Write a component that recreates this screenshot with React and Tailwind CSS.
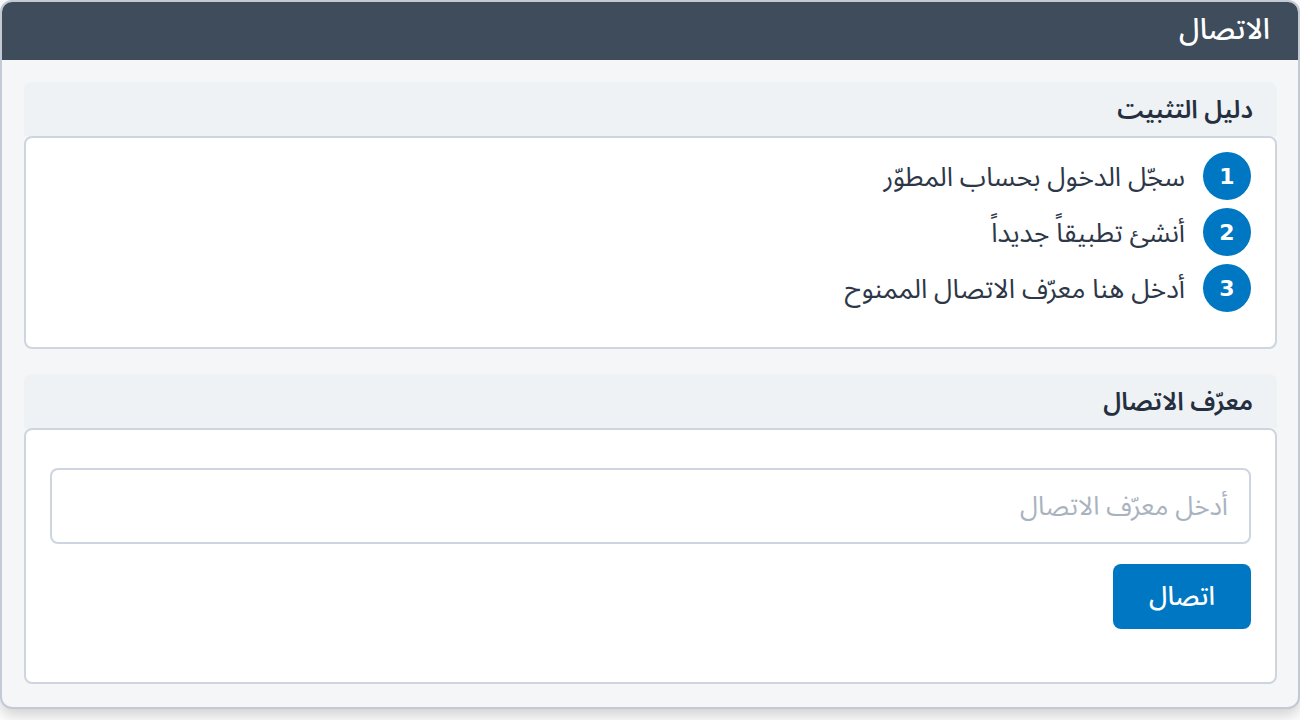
import React from 'react';

const steps = [
  'سجّل الدخول بحساب المطوّر',
  'أنشئ تطبيقاً جديداً',
  'أدخل هنا معرّف الاتصال الممنوح',
];

function Section({ title, children, bodyClass }) {
  return (
    <section>
      <h2 className="h-[54px] rounded-t-lg bg-[#eef2f5] px-6 pt-2 text-[25px] leading-[40px] font-semibold text-[#252f40]">
        {title}
      </h2>
      <div className={`rounded-lg border-2 border-[#cdd5df] bg-white ${bodyClass}`}>
        {children}
      </div>
    </section>
  );
}

export default function App() {
  return (
    <div dir="rtl" className="h-[720px] bg-white font-['Noto_Sans_Arabic','DejaVu_Sans',sans-serif]">
      <div className="h-[709px] rounded-xl border-2 border-[#c3cad5] bg-[#f4f6f8] shadow-[0_6px_16px_rgba(0,0,0,0.2)]">
        <header className="h-[58px] rounded-t-[10px] bg-[#3e4c5c] px-7 text-[29px] leading-[56px] font-medium text-white">
          الاتصال
        </header>
        <main className="flex flex-col gap-[25px] pt-[22px] pr-[21px] pl-[22px]">
          <Section title="دليل التثبيت" bodyClass="h-[213px] px-6 pt-[14px]">
            <ol className="flex flex-col gap-2">
              {steps.map((step, i) => (
                <li key={step} className="flex h-12 items-center gap-[18px]">
                  <span className="flex h-12 w-12 items-center justify-center rounded-full bg-[#0077c2] pt-px font-['DejaVu_Sans',sans-serif] text-[22px] font-bold text-white">
                    {i + 1}
                  </span>
                  <span className="pt-[3px] text-[26.5px] leading-[48px] text-[#2d3748]">{step}</span>
                </li>
              ))}
            </ol>
          </Section>
          <Section title="معرّف الاتصال" bodyClass="h-[256px] px-6 pt-[38px]">
            <input
              dir="rtl"
              placeholder="أدخل معرّف الاتصال"
              className="block h-[76px] w-full rounded-lg border-2 border-[#cdd5df] bg-white pr-[21px] pl-6 text-[26px] text-[#2d3748] outline-none placeholder:text-[#a9b3c0]"
            />
            <button className="mt-5 h-[65px] w-[138px] rounded-lg bg-[#0077c2] text-[26px] font-medium text-white">
              اتصال
            </button>
          </Section>
        </main>
      </div>
    </div>
  );
}
